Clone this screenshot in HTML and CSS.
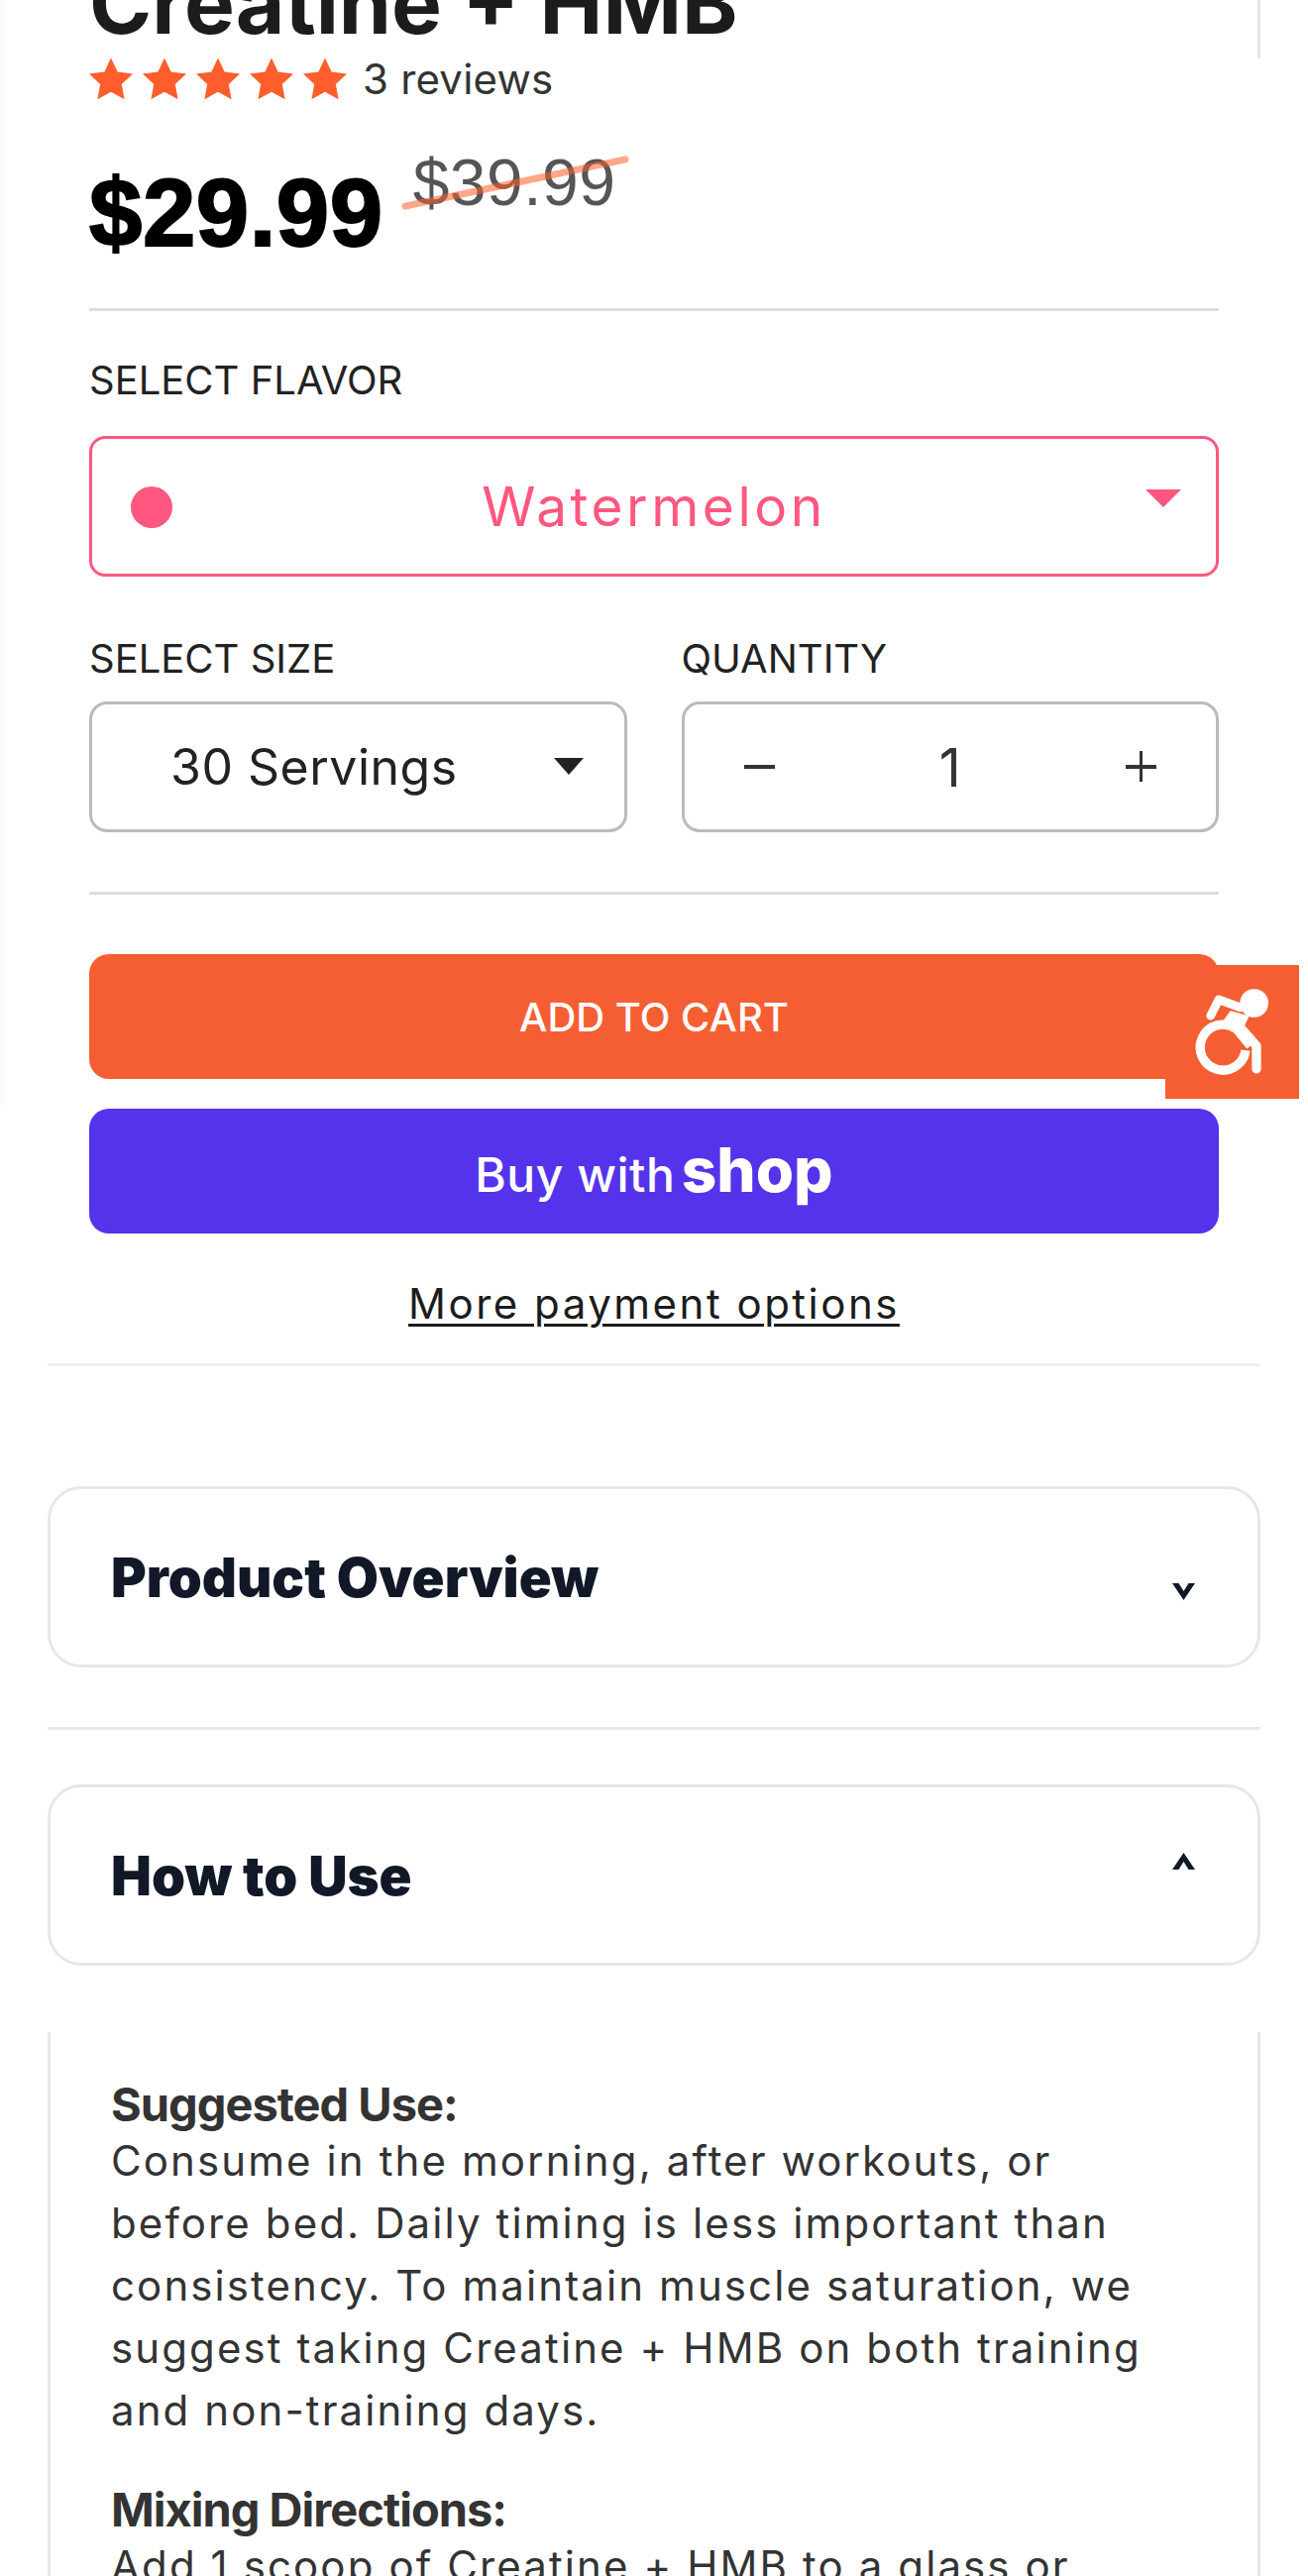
FILE: index.html
```html
<!DOCTYPE html>
<html lang="en">
<head>
  <meta charset="UTF-8" />
  <title>Creatine + HMB</title>
  <link rel="stylesheet" href="styles.css">
</head>
<body>
  <div class="top-area">
    <div class="buy-box">
      <h1 class="title">Creatine + HMB</h1>
      <div class="rating">
        <div class="stars">
          <svg class="star" viewBox="1 1 22 21.5"><path d="M12 1.2l3.3 7 7.700 1-5.600 5.300 1.400 7.600L12 18.400l-6.800 3.700 1.400-7.600L1 9.200l7.700-1z"/></svg>
          <svg class="star" viewBox="1 1 22 21.5"><path d="M12 1.2l3.3 7 7.700 1-5.600 5.300 1.400 7.600L12 18.400l-6.800 3.700 1.400-7.600L1 9.200l7.700-1z"/></svg>
          <svg class="star" viewBox="1 1 22 21.5"><path d="M12 1.2l3.3 7 7.700 1-5.600 5.300 1.400 7.600L12 18.400l-6.800 3.700 1.400-7.600L1 9.200l7.700-1z"/></svg>
          <svg class="star" viewBox="1 1 22 21.5"><path d="M12 1.2l3.3 7 7.700 1-5.600 5.300 1.400 7.600L12 18.400l-6.800 3.700 1.400-7.600L1 9.200l7.700-1z"/></svg>
          <svg class="star" viewBox="1 1 22 21.5"><path d="M12 1.2l3.3 7 7.700 1-5.600 5.300 1.400 7.600L12 18.400l-6.800 3.700 1.400-7.600L1 9.200l7.700-1z"/></svg>
        </div>
        <span class="review-count">3 reviews</span>
      </div>
      <div class="price-row">
        <span class="price">$29.99</span>
        <span class="price-old">$39.99</span>
      </div>

      <div class="field-label flavor-label">SELECT FLAVOR</div>
      <div class="flavor-select">
        <span class="flavor-dot"></span>
        <span class="flavor-name">Watermelon</span>
        <span class="flavor-arrow"></span>
      </div>

      <div class="option-row">
        <div class="option-col">
          <div class="field-label">SELECT SIZE</div>
          <div class="size-select">
            <span class="size-name">30 Servings</span>
            <span class="size-arrow"></span>
          </div>
        </div>
        <div class="option-col">
          <div class="field-label">QUANTITY</div>
          <div class="qty-box">
            <span class="qty-minus"></span>
            <span class="qty-value">1</span>
            <span class="qty-plus"></span>
          </div>
        </div>
      </div>

      <div class="btn btn-cart">ADD TO CART</div>
      <div class="btn-shop"><span class="buy-with">Buy with</span> <span class="shop-word">shop</span></div>
      <a class="more-options" href="#">More payment options</a>
    </div>
    <div class="a11y-badge">
      <svg viewBox="228 72 405 404" fill="none" stroke="#fff">
        <circle cx="497" cy="187" r="43" fill="#fff" stroke="none"/>
        <path d="M365 225L390 176L455 200" stroke-width="26" stroke-linecap="round" stroke-linejoin="round"/>
        <polygon points="425,210 482,225 462,268 503,303 475,325 430,270 402,242" fill="#fff" stroke="none"/>
        <path d="M440 263A69 69 0 1 0 471 330" stroke-width="28"/>
        <path d="M462 268L504 316V386" stroke-width="28" stroke-linecap="round" stroke-linejoin="round"/>
      </svg>
    </div>
  </div>

  <div class="accordion">
    <div class="acc-head">
      <span class="acc-title">Product Overview</span>
      <svg class="acc-chevron chevron-down" viewBox="0 0 23 17"><path d="M0 0h6.500l5 8 5-8H23L11.500 17z"/></svg>
    </div>
    <div class="acc-rule"></div>
    <div class="acc-head">
      <span class="acc-title">How to Use</span>
      <svg class="acc-chevron chevron-up" viewBox="0 0 23 17"><path d="M0 17h6.500l5-8 5 8H23L11.500 0z"/></svg>
    </div>
    <div class="acc-body">
      <h4 class="body-head">Suggested Use:</h4>
      <p class="body-text">Consume in the morning, after workouts, or before bed. Daily timing is less important than consistency. To maintain muscle saturation, we suggest taking Creatine + HMB on both training and non-training days.</p>
      <h4 class="body-head">Mixing Directions:</h4>
      <p class="body-text">Add 1 scoop of Creatine + HMB to a glass or</p>
    </div>
  </div>
</body>
</html>
```

FILE: styles.css
```css
html, body {
  height: 2600px;
  overflow: hidden;
}

body {
  margin: 0;
  background: #fff;
  color: #222;
  font-family: 'Inter', 'Liberation Sans', sans-serif;
}

.top-area {
  display: flow-root;
  position: relative;
  height: 1376px;
  margin: 0 48px;
  border-bottom: 3px solid #eee;
}

/* thin rule on the right of the title block */
.top-area::before {
  content: "";
  position: absolute;
  top: 0;
  right: 0;
  width: 3px;
  height: 59px;
  background: #e5e5e5;
}

/* faint edge on the far left of the page */
.top-area::after {
  content: "";
  position: absolute;
  top: 0;
  left: -48px;
  width: 5px;
  height: 1115px;
  background: #fbfbfb;
}

.buy-box {
  padding: 0 42px;
  height: 100%;
}

.title {
  margin: -49px 0 0;
  font-size: 85.5px;
  line-height: 104px;
  font-weight: 700;
  color: #1c1c1c;
  white-space: nowrap;
}

.rating {
  display: flex;
  align-items: center;
  margin-top: 2px;
  height: 44px;
}

.stars {
  display: flex;
  gap: 10px;
}

.star {
  width: 44px;
  height: 43px;
  fill: #ff5e2c;
  display: block;
}

.review-count {
  margin-left: 16px;
  font-size: 42px;
  letter-spacing: 0.2px;
  color: #333;
}

.price-row {
  display: flex;
  height: 213px;
  border-bottom: 3px solid #ddd;
  box-sizing: border-box;
}

.price {
  margin-top: 54px;
  font-family: 'Liberation Sans', sans-serif;
  font-size: 96px;
  line-height: 120px;
  font-weight: 700;
  letter-spacing: 0.5px;
  color: #000;
  -webkit-text-stroke: 2px #000;
}

.price-old {
  position: relative;
  margin: 43px 0 0 30px;
  font-family: 'Liberation Sans', sans-serif;
  font-size: 66px;
  line-height: 80px;
  letter-spacing: 0.5px;
  color: #555;
  height: 80px;
}

.price-old::after {
  content: "";
  position: absolute;
  left: -14px;
  top: 37px;
  width: 234px;
  height: 7px;
  border-radius: 4px;
  background: rgba(255, 94, 44, 0.55);
  transform: rotate(-12deg);
}

.field-label {
  font-size: 40px;
  line-height: 48px;
  color: #222;
}

.flavor-label {
  margin-top: 46px;
}

.flavor-select {
  display: flex;
  align-items: center;
  position: relative;
  height: 142px;
  margin-top: 32px;
  box-sizing: border-box;
  border: 3px solid #ff577f;
  border-radius: 16px;
}

.flavor-dot {
  position: absolute;
  left: 39px;
  top: 48px;
  width: 42px;
  height: 42px;
  border-radius: 50%;
  background: #ff577f;
}

.flavor-name {
  flex: 1;
  text-align: center;
  font-size: 55px;
  letter-spacing: 3.500px;
  color: #ff577f;
}

.flavor-arrow {
  position: absolute;
  right: 35px;
  top: 51px;
  border-left: 18px solid transparent;
  border-right: 18px solid transparent;
  border-top: 18px solid #ff577f;
}

.option-row {
  display: flex;
  gap: 55px;
  margin-top: 59px;
  padding-bottom: 60px;
  border-bottom: 3px solid #ddd;
}

.option-col {
  flex: 1;
}

.size-select, .qty-box {
  display: flex;
  align-items: center;
  position: relative;
  height: 132px;
  margin-top: 19px;
  box-sizing: border-box;
  border: 3px solid #bbb;
  border-radius: 18px;
}

.size-name {
  margin-left: 79px;
  font-size: 50px;
  letter-spacing: 0.500px;
  color: #222;
}

.size-arrow {
  position: absolute;
  right: 41px;
  top: 54px;
  border-left: 15px solid transparent;
  border-right: 15px solid transparent;
  border-top: 17px solid #222;
}

.qty-box {
  justify-content: space-between;
  padding: 0 60px;
}

.qty-value {
  font-size: 54px;
  color: #333;
}

.qty-minus, .qty-plus {
  position: relative;
  width: 31px;
  height: 4px;
  background: #333;
}

.qty-plus::after {
  content: "";
  position: absolute;
  left: 14px;
  top: -14px;
  width: 3px;
  height: 31px;
  background: #333;
}

.btn {
  display: flex;
  align-items: center;
  justify-content: center;
  height: 126px;
  border-radius: 20px;
  color: #fff;
}

.btn-cart {
  margin-top: 60px;
  background: #f55e32;
  font-size: 40px;
  font-weight: 500;
}

.btn-shop {
  height: 126px;
  margin-top: 30px;
  border-radius: 20px;
  background: #5433eb;
  color: #fff;
  text-align: center;
  line-height: 124px;
}

.buy-with {
  font-size: 48px;
  font-weight: 500;
  letter-spacing: 0.5px;
}

.shop-word {
  margin-left: 2px;
  font-size: 62px;
  font-weight: 800;
}

.more-options {
  display: block;
  margin-top: 45px;
  text-align: center;
  font-size: 42px;
  line-height: 52px;
  letter-spacing: 2.500px;
  color: #1c1c1c;
  text-decoration: underline;
  text-decoration-thickness: 3px;
  text-underline-offset: 5px;
}

.a11y-badge {
  position: absolute;
  left: 1128px;
  top: 974px;
  width: 135px;
  height: 135px;
  background: #f55e32;
}

.a11y-badge svg {
  display: block;
  width: 135px;
  height: 135px;
}

.accordion {
  margin: 121px 48px 0;
}

.acc-head {
  display: flex;
  align-items: center;
  position: relative;
  height: 183px;
  box-sizing: border-box;
  padding: 0 61px;
  border: 3px solid #e5e7eb;
  border-radius: 34px;
}

.acc-title {
  font-size: 54.5px;
  font-weight: 900;
  color: #111827;
}

.acc-chevron {
  position: absolute;
  right: 63px;
  width: 23px;
  height: 17px;
  fill: #111827;
}

.chevron-down {
  top: 95px;
}

.chevron-up {
  top: 66px;
}

.acc-rule {
  height: 3px;
  margin: 60px 0 55px;
  background: #e5e7eb;
}

.acc-body {
  box-sizing: border-box;
  height: 549px;
  margin-top: 67px;
  padding: 47px 99px 0 61px;
  border-left: 3px solid #e5e7eb;
  border-right: 3px solid #e5e7eb;
}

.body-head {
  margin: 0;
  font-size: 47px;
  line-height: 51px;
  font-weight: 700;
  color: #333;
  letter-spacing: -1px;
}

.body-text {
  margin: 0 0 43px;
  font-size: 42px;
  line-height: 63px;
  letter-spacing: 2.100px;
  color: #333;
}
```
